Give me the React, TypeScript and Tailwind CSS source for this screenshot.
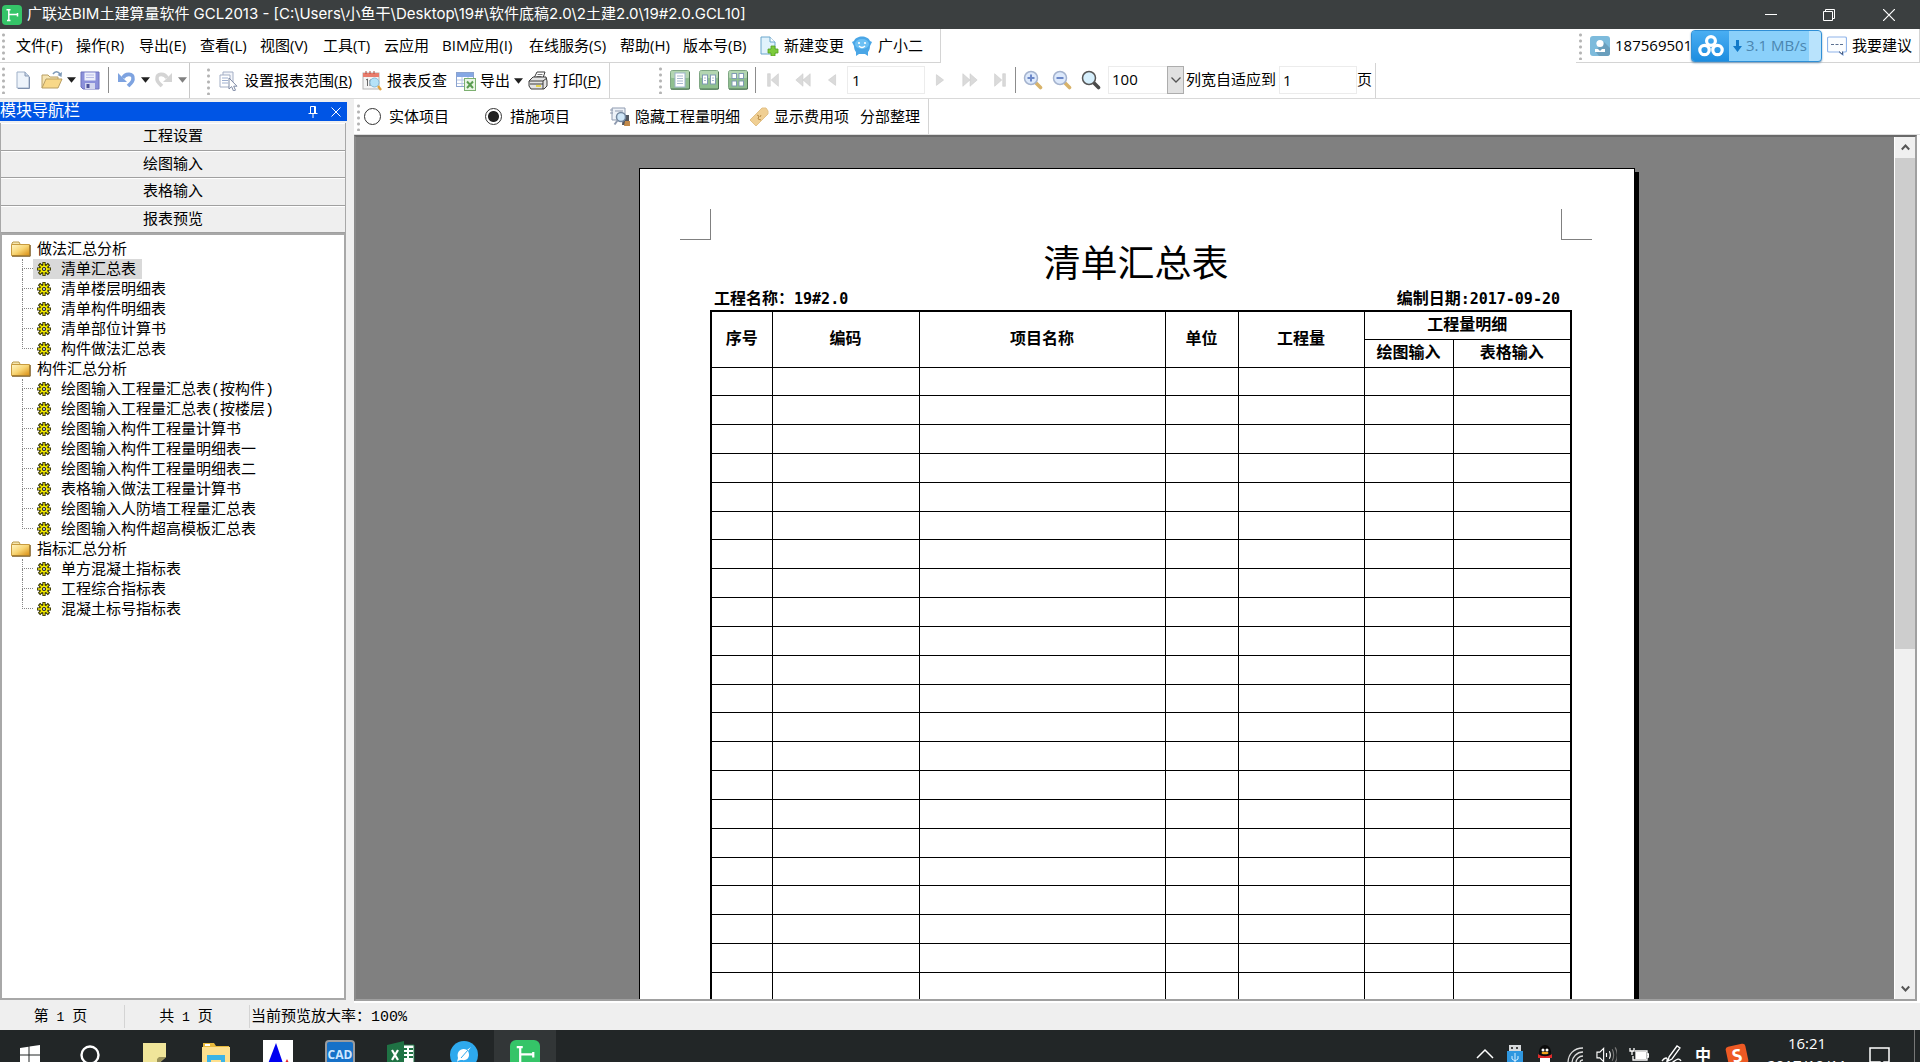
import { Fragment, type ReactNode } from "react";

const UI_FONT = "font-['Open_Sans','Noto_Sans_CJK_SC',sans-serif]";
const TITLE_FONT = "font-['Inter','Noto_Sans_CJK_SC',sans-serif]";
const SONG_FONT = "font-['Liberation_Mono','Noto_Sans_CJK_SC',sans-serif]";
const DIGIT_FONT = "font-['DejaVu_Sans_Mono',monospace]";

/* ---------- shared bits ---------- */

function Grip() {
  return (
    <span
      aria-hidden
      className="h-[28px] w-[3px] shrink-0 bg-[radial-gradient(circle,#b4b4b4_1px,transparent_2px)] bg-[length:3px_6px]"
    />
  );
}

function Bar() {
  return <span aria-hidden className="h-[26px] w-px shrink-0 bg-[#8c8c8c]" />;
}

function Caret({ muted = false }: { muted?: boolean }) {
  return (
    <svg viewBox="0 0 10 6" className={muted ? "h-[6px] w-[9px] text-[#808080]" : "h-[6px] w-[9px] text-[#202020]"}>
      <path d="M0 0h10L5 6z" fill="currentColor" />
    </svg>
  );
}

function Svg({ size = 20, children }: { size?: number; children: ReactNode }) {
  return (
    <svg width={size} height={size} viewBox="0 0 20 20" className="shrink-0" fill="none">
      {children}
    </svg>
  );
}

/* ---------- icons ---------- */

function GlodonIcon({ size }: { size: number }) {
  return (
    <Svg size={size}>
      <rect width="20" height="20" rx="4" fill="#35c468" />
      <path d="M4.500 4.700h4M6.800 4.700v11M5 15.400h3.500M7 9.500h9M15.500 8v3.600" stroke="#fff" strokeWidth="1.500" />
    </Svg>
  );
}

function NewIcon() {
  return (
    <Svg>
      <path d="M4 2h8l4 4v12H4z" fill="#eef4fb" stroke="#9fb0c8" />
      <path d="M12 2v4h4" fill="#c6d4e6" stroke="#8a9bb5" />
      <path d="M16.500 7v11.500H5" stroke="#8091ad" />
    </Svg>
  );
}

function OpenIcon() {
  return (
    <svg width="22" height="20" viewBox="0 0 22 20" fill="none" className="shrink-0">
      <path d="M1 18V5h6l2 2h8v4" fill="#f6e5b4" stroke="#b99f63" />
      <path d="M1 18 5 9h16l-4 9z" fill="#f8d888" stroke="#b99f63" />
      <path d="M12 4c2-3 5-3 7 0" stroke="#7d99b8" strokeWidth="1.600" />
      <path d="m21 2-.5 5-4-2z" fill="#7d99b8" />
    </svg>
  );
}

function SaveIcon() {
  return (
    <Svg>
      <path d="M1 2h18v17H3l-2-2z" fill="#8b90da" stroke="#6f73bd" />
      <rect x="4.500" y="2.500" width="11" height="8" fill="#eef0fb" />
      <path d="M6 5h8M6 7.500h8" stroke="#b9bde6" />
      <rect x="5" y="13" width="10" height="6" fill="#d4d7ef" />
      <rect x="6.500" y="14" width="3" height="4" fill="#4d5299" />
    </Svg>
  );
}

function UndoIcon({ muted = false }: { muted?: boolean }) {
  const c = muted ? "#d4d4d4" : "#7ea3e0";
  return (
    <svg width="18" height="18" viewBox="0 0 18 18" fill="none" className={muted ? "shrink-0 -scale-x-100" : "shrink-0"}>
      <path d="M5 7c2-5 11-5 10 1 0 3-3 5-5 7" stroke={c} strokeWidth="3.600" />
      <path d="M0 2v9h9z" fill={c} />
    </svg>
  );
}

function RangeIcon() {
  return (
    <Svg>
      <path d="M5 1h10v13H5z" fill="#f3f5fa" stroke="#a3aec5" />
      <path d="M2 4h10v12H2z" fill="#fff" stroke="#a3aec5" />
      <path d="M4 7h6M4 9.500h6M4 12h6" stroke="#9fb0d0" />
      <path d="M11 7v11l2.600-2.400L15.500 20l2-.8-1.800-4h3.300z" fill="#fff" stroke="#7f8ba5" />
    </Svg>
  );
}

function CheckBackIcon() {
  return (
    <Svg>
      <rect x="1" y="2" width="16" height="16" fill="#f4f4f4" stroke="#b4b4b4" />
      <rect x="1" y="2" width="16" height="4" fill="#e87c6c" />
      <path d="M4 0v3M8 0v3M12 0v3" stroke="#b04a3c" />
      <path d="M4 9l1.500-1v7M8 9h3M8 9v6" stroke="#666" />
      <circle cx="12.500" cy="11.500" r="4.500" fill="#b5e2f7" stroke="#86bbd8" />
      <path d="m16 15 3 4" stroke="#e2a23c" strokeWidth="2.400" />
    </Svg>
  );
}

function ExportIcon() {
  return (
    <Svg>
      <rect x="0.500" y="1.500" width="17" height="14" fill="#fff" stroke="#8ba3cf" />
      <rect x="1" y="2" width="16" height="4" fill="#86a8e4" />
      <path d="M1 9h16M1 12.500h16M6 6v9M12 6v9" stroke="#b9c8e4" />
      <rect x="8.500" y="7.500" width="11" height="12" fill="#e9f5e4" stroke="#7cb070" />
      <path d="m11 10.500 6 6.500M17 10.500l-6 6.500" stroke="#5a9c50" strokeWidth="2" />
    </Svg>
  );
}

function PrintIcon() {
  return (
    <Svg>
      <path d="M6 7 9 1h8l-2 6z" fill="#fff" stroke="#3c3c3c" />
      <path d="M9.500 3.500h5M8.500 5.500h5" stroke="#777" />
      <path d="m1 10 4-4h13l1 4v5l-3 3H3l-2-3z" fill="#e4e4e4" stroke="#3c3c3c" />
      <path d="M1 10h14l4-3M15 10v8M2 13h13" stroke="#3c3c3c" />
      <path d="M8 15h5" stroke="#e8d22a" strokeWidth="1.600" />
    </Svg>
  );
}

function PageView({ variant }: { variant: 1 | 2 | 4 }) {
  return (
    <Svg>
      <rect x="0.500" y="0.500" width="19" height="19" rx="2" fill="#8fbf8f" stroke="#7fa784" />
      <rect x="1" y="1" width="18" height="7" rx="1" fill="#b3d6b1" />
      <path d="M1 19h18.500V2" stroke="#4f7556" />
      {variant === 1 && (
        <>
          <rect x="5" y="3" width="10" height="14" fill="#fff" stroke="#9db4cc" />
          <path d="M7 6h6M7 8.500h6M7 11h6M7 13.500h6" stroke="#a8b9cf" />
        </>
      )}
      {variant === 2 && (
        <>
          <rect x="3.500" y="5" width="5" height="9" fill="#fff" stroke="#7f9bb3" />
          <rect x="11.500" y="5" width="5" height="9" fill="#fff" stroke="#7f9bb3" />
          <path d="M5 8h2M5 10.500h2M13 8h2M13 10.500h2" stroke="#a8b9cf" />
        </>
      )}
      {variant === 4 && (
        <>
          <rect x="4" y="3.500" width="4.500" height="5" fill="#fff" stroke="#7f9bb3" />
          <rect x="11" y="3.500" width="4.500" height="5" fill="#fff" stroke="#7f9bb3" />
          <rect x="4" y="11" width="4.500" height="5" fill="#fff" stroke="#7f9bb3" />
          <rect x="11" y="11" width="4.500" height="5" fill="#fff" stroke="#7f9bb3" />
        </>
      )}
    </Svg>
  );
}

function NavIcon({ kind }: { kind: "first" | "back" | "prev" | "next" | "forward" | "last" }) {
  const shapes = {
    first: "M4 3h3v14H4zM16 3v14L8 10z",
    back: "M10 3v14L2 10zM18 3v14l-8-7z",
    prev: "M14 4v12l-8-6z",
    next: "M6 4v12l8-6z",
    forward: "M2 3v14l8-7zM10 3v14l8-7z",
    last: "M13 3h3v14h-3zM4 3v14l8-7z",
  };
  return (
    <Svg size={18}>
      <path d={shapes[kind]} fill="#dadada" stroke="#c9c9c9" strokeWidth="0.600" />
    </Svg>
  );
}

function Lens({ sign }: { sign?: "+" | "-" }) {
  return (
    <Svg>
      <path d="m12.500 12.500 5 5" stroke={sign ? "#d8b36a" : "#4a4a4a"} strokeWidth="3.600" strokeLinecap="round" />
      <circle cx="8" cy="8" r="6.500" fill={sign ? "#dde9fb" : "#d6effc"} stroke={sign ? "#a4b3ce" : "#555"} strokeWidth="1.500" />
      {sign && <path d={sign === "+" ? "M4.500 8h7M8 4.500v7" : "M4.500 8h7"} stroke="#6c88c8" strokeWidth="2" />}
    </Svg>
  );
}

function NewChangeIcon() {
  return (
    <Svg>
      <path d="M2 1h9l5 5v12H2z" fill="#e0f2fc" stroke="#6ba6cc" />
      <path d="M11 1v5h5" fill="#fff" stroke="#6ba6cc" />
      <path d="M12 10h4v3h3v4h-3v3h-4v-3H9v-4h3z" fill="#7ccb3c" stroke="#56a01f" strokeWidth="0.800" />
    </Svg>
  );
}

function MascotIcon() {
  return (
    <Svg>
      <path d="M2 5c2-6 14-6 16 0l2 1-2 4c0 3-1 5-2 6v4l-3-2H7l-3 2v-4c-1-1-2-3-2-6L0 6z" fill="#4aa6e6" />
      <ellipse cx="10" cy="8" rx="7" ry="5" fill="#6cc0f4" />
      <circle cx="7" cy="7" r="1.100" fill="#fff" />
      <circle cx="13" cy="7" r="1.100" fill="#fff" />
      <path d="M7 10c2 2 4 2 6 0" stroke="#fff" strokeWidth="1.200" />
    </Svg>
  );
}

function UserIcon() {
  return (
    <Svg>
      <rect width="20" height="20" rx="3" fill="#7dbbdc" />
      <path d="m14 6 6 6v5a3 3 0 0 1-3 3H9l-4-5z" fill="#6a9fbd" />
      <circle cx="10" cy="7.500" r="3.600" fill="#fff" />
      <path d="M5 13h3l2 2 2-2h3v3H5z" fill="#fff" />
    </Svg>
  );
}

function ChatIcon() {
  return (
    <Svg>
      <path d="M2 1h16a1.500 1.500 0 0 1 1.500 1.500v12A1.500 1.500 0 0 1 18 16h-2v3l-4-3H2a1.500 1.500 0 0 1-1.500-1.500v-12A1.500 1.500 0 0 1 2 1z" fill="#fbfdff" stroke="#8fb4ea" strokeWidth="1.200" />
      <path d="M4 8.500h3M8.500 8.500h3M13 8.500h3" stroke="#5a6f90" />
      <path d="m12 15.500 3.500 3v-3" stroke="#4a5d7d" />
    </Svg>
  );
}

function HideDetailIcon() {
  return (
    <Svg>
      <path d="M2 1h13v12H2z" fill="#eef2f8" stroke="#8f9bb0" />
      <path d="M0 3h3M0 6h3M5 4h8" stroke="#8f9bb0" />
      <path d="M13 8h6v10h-7z" fill="#51565f" />
      <path d="M15 14h5v5h-6z" fill="#c28a4b" />
      <circle cx="11" cy="10" r="4.500" fill="#cfe6f8" stroke="#73879f" strokeWidth="1.500" />
      <path d="m7.500 13.500-3 4" stroke="#8f9bb0" strokeWidth="2" />
    </Svg>
  );
}

function FeeIcon() {
  return (
    <Svg>
      <path d="M1 13 13 1h4l2 3v3L7 19z" fill="#f0cf93" stroke="#e2c188" />
      <path d="m8 8 2 1-1 3 3 1M12 8l-1 2" stroke="#b98c45" />
    </Svg>
  );
}

function FolderIcon() {
  return (
    <svg width="20" height="16" viewBox="0 0 20 16" fill="none" className="shrink-0">
      <defs>
        <linearGradient id="folder" x1="0" y1="0" x2="1" y2="1">
          <stop offset="0" stopColor="#fff6c8" />
          <stop offset="0.500" stopColor="#f8d573" />
          <stop offset="1" stopColor="#d88d12" />
        </linearGradient>
      </defs>
      <path d="M1 4V2l1-1h6l1 2v1" fill="#f5e5ad" stroke="#b99b4d" />
      <path d="M0.500 3.500h18v11h-18z" fill="url(#folder)" stroke="#c79a3f" />
      <path d="M1 15.200h18.200V4" stroke="#6e4a0c" />
    </svg>
  );
}

function GearIcon() {
  const spokes = "M7 .8v12.400M.8 7h12.400M2.700 2.700l8.600 8.600M11.300 2.700l-8.600 8.600";
  return (
    <svg width="14" height="14" viewBox="0 0 14 14" fill="none" className="shrink-0">
      <path d="M7 0v14M0 7h14M2 2l10 10M12 2 2 12" stroke="#2a2900" strokeWidth="3.200" />
      <circle cx="7" cy="7" r="5" fill="#2a2900" />
      <path d={spokes} stroke="#f4ec00" strokeWidth="1.400" />
      <circle cx="7" cy="7" r="3.600" fill="#f4ec00" />
      <circle cx="7" cy="7" r="1.500" fill="#fff" stroke="#222" strokeWidth="1.200" />
    </svg>
  );
}

/* ---------- title and menus ---------- */

function TitleBar() {
  return (
    <header className="flex h-[29px] shrink-0 items-center bg-[#3b3f40] pl-[2px] text-white">
      <GlodonIcon size={20} />
      <h1 className={`mb-px ml-[5px] flex-1 text-[15px] leading-5 whitespace-nowrap ${TITLE_FONT}`}>
        广联达BIM土建算量软件 GCL2013 - [C:\Users\小鱼干\Desktop\19#\软件底稿2.0\2土建2.0\19#2.0.GCL10]
      </h1>
      <button aria-label="最小化" className="flex h-full w-[58px] items-center justify-center">
        <svg width="12" height="12" viewBox="0 0 12 12"><path d="M0 5.500h12" stroke="#fff" /></svg>
      </button>
      <button aria-label="还原" className="flex h-full w-[58px] items-center justify-center">
        <svg width="12" height="12" viewBox="0 0 12 12" fill="none" stroke="#fff"><path d="M.5 2.500h9v9h-9zM2.500 2V.5h9v9H10" /></svg>
      </button>
      <button aria-label="关闭" className="flex h-full w-[62px] items-center justify-center">
        <svg width="12" height="12" viewBox="0 0 12 12"><path d="m0 0 12 12M12 0 0 12" stroke="#fff" strokeWidth="1.200" /></svg>
      </button>
    </header>
  );
}

const MENUS = [
  { label: "文件(F)", width: "w-[60px]" },
  { label: "操作(R)", width: "w-[63px]" },
  { label: "导出(E)", width: "w-[61px]" },
  { label: "查看(L)", width: "w-[60px]" },
  { label: "视图(V)", width: "w-[63px]" },
  { label: "工具(T)", width: "w-[61px]" },
  { label: "云应用", width: "w-[58px]" },
  { label: "BIM应用(I)", width: "w-[87px]" },
  { label: "在线服务(S)", width: "w-[91px]" },
  { label: "帮助(H)", width: "w-[63px]" },
  { label: "版本号(B)", width: "w-[76px]" },
];

function MenuRow() {
  return (
    <div className="flex h-[34px] shrink-0 justify-between">
      <nav className="flex h-full items-center border-r border-b border-[#d4d4d4] pl-[2px] text-[15px]">
        <Grip />
        <span className="w-[11px]" />
        {MENUS.map((m) => (
          <button key={m.label} className={`${m.width} text-left whitespace-nowrap`}>{m.label}</button>
        ))}
        <button className="flex w-[93px] items-center gap-[5px] whitespace-nowrap"><NewChangeIcon />新建变更</button>
        <button className="flex w-[78px] items-center gap-[6px] whitespace-nowrap"><MascotIcon />广小二</button>
        <span className="w-[10px]" />
      </nav>
      <div className="flex h-full items-center border-r border-b border-[#d4d4d4] pl-[3px] text-[15px]">
        <Grip />
        <button className="ml-2 flex w-[101px] items-center gap-[5px] whitespace-nowrap"><UserIcon />187569501</button>
        <div className="z-10 flex h-[32px] w-[131px] overflow-hidden rounded-[4px] border border-[#2f8fd6] bg-[#8ad0fa] shadow-[0_1px_2px_#7a9ab5]">
          <div className="flex w-[37px] items-center justify-center bg-linear-to-b from-[#49aef2] to-[#1b8de0]">
            <svg width="26" height="22" viewBox="0 0 26 22" fill="none" stroke="#fff" strokeWidth="3.200">
              <circle cx="13" cy="6" r="4.400" />
              <circle cx="6.500" cy="15" r="4.700" />
              <circle cx="19.500" cy="15" r="4.700" />
            </svg>
          </div>
          <div className="flex flex-1 items-center gap-1 pl-1 text-[15px] whitespace-nowrap text-[#4a86b0]">
            <svg width="9" height="12" viewBox="0 0 9 12"><path d="M3 0h3v6h3l-4.500 6L0 6h3z" fill="#1279c8" /></svg>
            3.1 MB/s
          </div>
          <span className="-ml-3 w-3 bg-white/40" />
        </div>
        <button className="ml-[5px] flex w-[92px] items-center gap-[5px] whitespace-nowrap"><ChatIcon />我要建议</button>
      </div>
    </div>
  );
}

/* ---------- toolbars ---------- */

const PAGER_BACK = [
  { kind: "first", label: "首页" },
  { kind: "back", label: "快退" },
  { kind: "prev", label: "上一页" },
] as const;

const PAGER_FORWARD = [
  { kind: "next", label: "下一页" },
  { kind: "forward", label: "快进" },
  { kind: "last", label: "末页" },
] as const;

function Toolbar() {
  return (
    <div className="flex h-[36px] shrink-0 border-b border-[#d9d9d9] text-[15px] whitespace-nowrap">
      <div className="flex w-[190px] items-center border-r border-[#c8c8c8] pb-[2px] pl-[2px]">
        <Grip />
        <button aria-label="新建" className="ml-2"><NewIcon /></button>
        <button aria-label="打开" className="ml-2 flex items-center gap-1"><OpenIcon /><Caret /></button>
        <button aria-label="保存" className="ml-1 mr-2"><SaveIcon /></button>
        <Bar />
        <button aria-label="撤销" className="ml-[9px] flex items-center gap-[5px]"><UndoIcon /><Caret /></button>
        <button aria-label="重做" className="ml-1 flex items-center gap-[6px]"><UndoIcon muted /><Caret muted /></button>
      </div>
      <div className="flex w-[420px] items-center border-r border-[#d4d4d4] pl-[17px]">
        <Grip />
        <button className="ml-2 flex w-[144px] items-center gap-[6px]"><RangeIcon /><span>设置报表范围(<u>R</u>)</span></button>
        <button className="flex w-[94px] items-center gap-[5px]"><CheckBackIcon />报表反查</button>
        <button className="flex w-[72px] items-center gap-1"><ExportIcon />导出<Caret /></button>
        <button className="flex items-center gap-[5px]"><PrintIcon /><span>打印(<u>P</u>)</span></button>
      </div>
      <div className="flex w-[766px] items-center border-r border-[#d4d4d4] pb-[2px] pl-[49px]">
        <Grip />
        <div className="ml-2 flex gap-[9px]">
          <button aria-label="单页"><PageView variant={1} /></button>
          <button aria-label="双页"><PageView variant={2} /></button>
          <button aria-label="多页"><PageView variant={4} /></button>
        </div>
        <span className="w-[7px]" />
        <Bar />
        <div className="ml-2 flex w-[77px] justify-between">
          {PAGER_BACK.map((p) => (
            <button key={p.kind} aria-label={p.label}><NavIcon kind={p.kind} /></button>
          ))}
        </div>
        <input aria-label="页码" defaultValue="1" className="ml-[6px] h-[28px] w-[78px] border border-[#ececec] px-1 text-[15px]" />
        <div className="ml-[6px] flex w-[78px] justify-between">
          {PAGER_FORWARD.map((p) => (
            <button key={p.kind} aria-label={p.label}><NavIcon kind={p.kind} /></button>
          ))}
        </div>
        <span className="w-[6px]" />
        <Bar />
        <div className="mx-[7px] flex gap-[9px]">
          <button aria-label="放大"><Lens sign="+" /></button>
          <button aria-label="缩小"><Lens sign="-" /></button>
          <button aria-label="缩放"><Lens /></button>
        </div>
        <div className="relative h-[28px] w-[76px] shrink-0">
          <select aria-label="缩放比例" defaultValue="100" className="h-full w-full appearance-none border border-[#ececec] px-[3px] text-[15px]">
            <option>100</option>
          </select>
          <span className="pointer-events-none absolute top-0 right-0 flex h-full w-[17px] items-center justify-center border border-[#adadad] bg-[#e1e1e1]">
            <svg width="10" height="6" viewBox="0 0 10 6" fill="none"><path d="m.5.5 4.500 4.500L9.500.5" stroke="#555" strokeWidth="1.300" /></svg>
          </span>
        </div>
        <label htmlFor="fit" className="ml-[2px] w-[93px]">列宽自适应到</label>
        <input id="fit" defaultValue="1" className="h-[28px] w-[78px] border border-[#ececec] px-[3px] text-[15px]" />
        <span>页</span>
      </div>
    </div>
  );
}

function OptionsRow() {
  const radio = "size-[17px] appearance-none rounded-full border border-[#333] bg-white checked:bg-[radial-gradient(circle,#222_5px,#fff_6px)]";
  return (
    <div className="flex h-[36px] shrink-0 border-b border-[#dedede] text-[15px] whitespace-nowrap">
      <div className="flex w-[575px] items-center border-r border-[#d4d4d4] pl-[3px]">
        <Grip />
        <label className="ml-1 flex w-[121px] items-center gap-2"><input type="radio" name="kind" className={radio} />实体项目</label>
        <label className="flex w-[125px] items-center gap-2"><input type="radio" name="kind" defaultChecked className={radio} />措施项目</label>
        <button className="flex w-[139px] items-center gap-[5px]"><HideDetailIcon />隐藏工程量明细</button>
        <button className="flex w-[111px] items-center gap-[5px]"><FeeIcon />显示费用项</button>
        <button>分部整理</button>
      </div>
    </div>
  );
}

/* ---------- navigation sidebar ---------- */

const TREE = [
  {
    label: "做法汇总分析",
    items: ["清单汇总表", "清单楼层明细表", "清单构件明细表", "清单部位计算书", "构件做法汇总表"],
  },
  {
    label: "构件汇总分析",
    items: [
      "绘图输入工程量汇总表(按构件)",
      "绘图输入工程量汇总表(按楼层)",
      "绘图输入构件工程量计算书",
      "绘图输入构件工程量明细表一",
      "绘图输入构件工程量明细表二",
      "表格输入做法工程量计算书",
      "绘图输入人防墙工程量汇总表",
      "绘图输入构件超高模板汇总表",
    ],
  },
  { label: "指标汇总分析", items: ["单方混凝土指标表", "工程综合指标表", "混凝土标号指标表"] },
];

function Sidebar() {
  return (
    <aside className={`flex w-[347px] shrink-0 flex-col pt-[3px] pb-[3px] text-[15px] ${SONG_FONT}`}>
      <div className="flex h-[19px] shrink-0 items-center bg-[#0055e5] text-white">
        <h2 className="flex-1 pt-[1px] text-[16px] leading-[18px]">模块导航栏</h2>
        <button aria-label="固定" className="mr-[13px]">
          <svg width="10" height="12" viewBox="0 0 10 12" fill="none" stroke="#fff"><path d="M2.500 7V.5h5V7M6.500 1v6M.5 7.500h9M5 8v4" /></svg>
        </button>
        <button aria-label="关闭" className="mr-[6px]">
          <svg width="10" height="10" viewBox="0 0 10 10"><path d="m.5.5 9 9M9.500.5l-9 9" stroke="#fff" /></svg>
        </button>
      </div>
      <div className="mt-[2px] mr-[1px] grid h-[110px] shrink-0 grid-rows-4 border-x border-[#a8a8a8]">
        {["工程设置", "绘图输入", "表格输入", "报表预览"].map((t) => (
          <button key={t} className="border-t border-b border-t-white border-b-[#a0a0a0] bg-[#efefef] pt-[3px] leading-5">{t}</button>
        ))}
      </div>
      <div className="mr-[1px] min-h-0 flex-1 border-2 border-[#a8a8a8] bg-white pt-1">
        {TREE.map((group) => (
          <Fragment key={group.label}>
            <div className="flex h-5 items-center pl-[9px] leading-5"><FolderIcon /><span className="ml-[6px] pt-[3px]">{group.label}</span></div>
            <ul>
              {group.items.map((item, i) => (
                <li key={item} className="flex h-5 pl-[20px]">
                  <span className="flex w-[11px] flex-col">
                    <span className="h-[10px] border-b border-l border-dotted border-[#888]" />
                    {i < group.items.length - 1 && <span className="flex-1 border-l border-dotted border-[#888]" />}
                  </span>
                  <a
                    href="#"
                    className={
                      item === "清单汇总表"
                        ? "flex items-center bg-[#d9d9d9] pr-[6px] pl-1 leading-5 whitespace-nowrap"
                        : "flex items-center pl-1 leading-5 whitespace-nowrap"
                    }
                  >
                    <GearIcon />
                    <span className="ml-[10px] pt-[3px]">{item}</span>
                  </a>
                </li>
              ))}
            </ul>
          </Fragment>
        ))}
      </div>
    </aside>
  );
}

/* ---------- report preview ---------- */

const BODY_ROWS = Array.from({ length: 30 }, (_, i) => i);
const COLUMNS = ["w-[61px]", "w-[147px]", "w-[246px]", "w-[73px]", "w-[126px]", "w-[89px]", "w-[118px]"];

function Report() {
  const cell = "border border-black p-0";
  const headCell = "border border-black p-0 pt-[2px]";
  return (
    <article className={`mt-[31px] h-[1410px] w-[996px] shrink-0 border border-black bg-white pt-[40px] pl-[40px] shadow-[4px_4px_0_#000] ${SONG_FONT}`}>
      <div className="flex w-[912px] justify-between">
        <span className="size-[31px] border-r border-b border-[#808080]" />
        <span className="size-[31px] border-b border-l border-[#808080]" />
      </div>
      <div className="ml-[30px] w-[860px]">
        <h2 className="mr-2 pt-[6px] text-center text-[37px] leading-[43px]">清单汇总表</h2>
        <div className="mr-2 flex h-[21px] justify-between pr-[2px] pl-1 text-[16px] leading-5 font-bold">
          <p>工程名称：<span className={`text-[15px] ${DIGIT_FONT}`}>19#2.0</span></p>
          <p>编制日期<span className={`text-[15px] ${DIGIT_FONT}`}>:2017-09-20</span></p>
        </div>
        <table className="h-[923px] w-full table-fixed border-collapse border-2 border-black text-[16px] leading-5">
          <colgroup>
            {COLUMNS.map((w, i) => (
              <col key={i} className={w} />
            ))}
          </colgroup>
          <thead>
            <tr className="h-[28px]">
              {["序号", "编码", "项目名称", "单位", "工程量"].map((t) => (
                <th key={t} rowSpan={2} className={headCell}>{t}</th>
              ))}
              <th colSpan={2} className={headCell}>工程量明细</th>
            </tr>
            <tr className="h-[28px]">
              <th className={headCell}>绘图输入</th>
              <th className={headCell}>表格输入</th>
            </tr>
          </thead>
          <tbody>
            {BODY_ROWS.map((r) => (
              <tr key={r} className="h-[28px]">
                {COLUMNS.map((_, c) => (
                  <td key={c} className={cell} />
                ))}
              </tr>
            ))}
          </tbody>
        </table>
      </div>
    </article>
  );
}

function Scrollbar() {
  return (
    <div className="flex w-[21px] shrink-0 flex-col border-l border-white bg-[#f0f0f0]">
      <button aria-label="向上滚动" className="flex h-[21px] shrink-0 items-center justify-center">
        <svg width="9" height="7" viewBox="0 0 9 7" fill="none"><path d="m.8 5.500 3.700-4 3.700 4" stroke="#555" strokeWidth="2" /></svg>
      </button>
      <div className="h-[491px] bg-[#cdcdcd]" />
      <span className="flex-1" />
      <button aria-label="向下滚动" className="flex h-[22px] shrink-0 items-center justify-center">
        <svg width="9" height="7" viewBox="0 0 9 7" fill="none"><path d="m.8 1.500 3.700 4 3.700-4" stroke="#555" strokeWidth="2" /></svg>
      </button>
    </div>
  );
}

/* ---------- status and task bars ---------- */

function StatusBar() {
  return (
    <footer className={`flex h-[27px] shrink-0 items-stretch bg-[#efefef] py-[2px] text-[15px] leading-[25px] whitespace-pre ${SONG_FONT}`}>
      <span className="w-[125px] border-r border-[#d4d4d4] pr-[3px] text-center">第<span className="text-[13px]"> 1 </span>页</span>
      <span className="w-[125px] border-r border-[#d4d4d4] pr-[2px] text-center">共<span className="text-[13px]"> 1 </span>页</span>
      <span className="pl-px">当前预览放大率：<span className="text-[15px]">100%</span></span>
    </footer>
  );
}

function TaskBar() {
  return (
    <div className="flex h-[32px] shrink-0 items-start justify-between overflow-hidden bg-[#222627] text-white">
      <div className="flex h-[50px] items-center">
        <button aria-label="开始" className="flex w-[60px] justify-center">
          <svg width="20" height="20" viewBox="0 0 20 20" fill="#fff"><path d="M0 3l8.500-1.200V9.500H0zM9.500 1.600 20 0v9.500H9.500zM0 10.500h8.500v7.700L0 17zM9.500 10.500H20V20l-10.500-1.500z" /></svg>
        </button>
        <button aria-label="搜索" className="flex w-[60px] justify-center">
          <svg width="20" height="20" viewBox="0 0 20 20" fill="none"><circle cx="10" cy="10" r="8.500" stroke="#fff" strokeWidth="2.400" /></svg>
        </button>
        <button aria-label="便笺" className="flex w-[66px] justify-center pl-[3px]">
          <svg width="24" height="24" viewBox="0 0 24 24"><path d="M0 0h23v14l-9 8H0z" fill="#f0e59a" /><path d="M14 22v-6l2-2h7z" fill="#9c935a" /></svg>
        </button>
        <button aria-label="文件资源管理器" className="flex w-[60px] justify-center">
          <svg width="28" height="26" viewBox="0 0 28 26"><path d="M1 1h11l2 3h13v21H1z" fill="#e8b93c" /><path d="M3 2h5v2H3z" fill="#fff" /><path d="M0 5h28v20H0z" fill="#fee08e" /><path d="M5 25V13h18v12h-4v-7h-10v7z" fill="#3cb4e6" /></svg>
        </button>
        <button aria-label="绘图" className="flex w-[62px] justify-center pl-px">
          <svg width="30" height="30" viewBox="0 0 30 30"><path d="M0 0h30v30H0z" fill="#fff" /><path d="m13 3 9 26H3z" fill="#0000f0" /><path d="m24 19 4 8h-8z" fill="#e8262a" /></svg>
        </button>
        <button aria-label="CAD" className="flex w-[62px] justify-center pl-[2px]">
          <span className="flex size-[30px] items-center justify-center rounded-[4px] border-2 border-[#9a9c9e] bg-[#1671c8] text-[12px] leading-4 font-bold text-[#cfe8ff]">CAD</span>
        </button>
        <button aria-label="Excel" className="flex w-[62px] justify-center">
          <svg width="28" height="28" viewBox="0 0 28 28"><path d="M14 4h13v20H14z" fill="#fff" stroke="#1f7244" /><path d="M16 8h4M16 12h4M16 16h4M22 8h4M22 12h4M22 16h4" stroke="#1f7244" strokeWidth="2" /><path d="m0 4 17-4v28L0 24z" fill="#1f7244" /><path d="m5 9 6 10M11 9 5 19" stroke="#fff" strokeWidth="2.200" /></svg>
        </button>
        <button aria-label="浏览器" className="flex w-[62px] justify-center pl-px">
          <svg width="28" height="28" viewBox="0 0 28 28"><circle cx="14" cy="14" r="14" fill="#2ea9ee" /><path d="m21 6-3 4c3 6-1 10-6 9-2 0-3 0-5 2l1-4c-2-7 4-11 9-8z" fill="#fff" /><path d="m11 17 7-8" stroke="#2ea9ee" /></svg>
        </button>
        <button aria-label="广联达" className="flex h-full w-[62px] items-center justify-center bg-[#323637]"><GlodonIcon size={30} /></button>
      </div>
      <div className="flex h-[50px] items-center">
        <div className="flex items-center gap-3">
          <svg width="18" height="18" viewBox="0 0 18 18" fill="none" stroke="#fff" strokeWidth="1.500"><path d="m1 12 8-8 8 8" /></svg>
          <svg width="18" height="20" viewBox="0 0 18 20"><path d="M3 0h12v6H3z" fill="#d6d9db" /><path d="M5 2h2v2H5zM10 2h2v2h-2z" fill="#444" /><path d="M1 6h16v14H1z" fill="#2f97e0" /><path d="M9 8v11M6 11v3l3 2 3-2v-3" stroke="#d8efff" fill="none" /></svg>
          <svg width="18" height="20" viewBox="0 0 18 20"><ellipse cx="9" cy="7" rx="6" ry="7" fill="#0c0c0c" /><circle cx="7" cy="5" r="1.500" fill="#fff" /><circle cx="11" cy="5" r="1.500" fill="#fff" /><ellipse cx="9" cy="8" rx="3.500" ry="1.300" fill="#f3a51b" /><path d="M2 9c4 3 10 3 14 0v4H2z" fill="#e02a2a" /><path d="M4 13h10v7H4z" fill="#fff" /></svg>
          <svg width="18" height="18" viewBox="0 0 18 18" fill="none" stroke="#ddd" strokeWidth="1.300"><path d="M2 17C2 8 8 2 17 2M6 17c0-6 5-11 11-11M10 17c0-4 3-7 7-7M14 17c0-2 1-3 3-3" /></svg>
          <svg width="21" height="18" viewBox="0 0 22 18" fill="none" stroke="#fff" strokeWidth="1.200"><path d="M1 6h3l4-4v14l-4-4H1zM11 7v4M14 5c1 2 1 6 0 8" /><path d="M17 3c2 4 2 8 0 12M20 1c3 5 3 11 0 16" stroke="#777" /></svg>
          <svg width="20" height="18" viewBox="0 0 20 18" fill="none" stroke="#fff" strokeWidth="1.300"><path d="M6 5h12v9H4v-4M18 8h1.500v3H18" /><path d="M7 6.500h9.500v6H7z" fill="#fff" /><path d="M1 2v3h4V2M3 5v4" /></svg>
          <svg width="22" height="20" viewBox="0 0 22 20" fill="none" stroke="#fff" strokeWidth="1.300"><path d="m8 12 8-11 3 2-8 11-4 2zM1 16c3-4 6-4 5 0s3 3 6 1 6-5 8-1" /></svg>
          <span className="text-[16px] leading-5 font-bold">中</span>
          <span className="ml-1 flex size-[20px] -rotate-12 items-center justify-center rounded-[3px] bg-[#ee5a24] text-[18px] leading-5 font-bold">S</span>
        </div>
        <div className="mt-[-2px] ml-[20px] w-[80px] text-center text-[15px] leading-[22px]">
          <div>16:21</div>
          <div>2017/10/11</div>
        </div>
        <svg width="21" height="20" viewBox="0 0 21 20" fill="none" stroke="#fff" strokeWidth="1.500" className="mt-1 ml-[22px]"><path d="M1 1h19v14h-5v4l-4-4H1z" /></svg>
        <span className="ml-6 h-full w-px bg-[#777]" />
        <span className="w-[5px]" />
      </div>
    </div>
  );
}

export default function App() {
  return (
    <div className={`flex h-screen flex-col overflow-hidden bg-white text-black ${UI_FONT}`}>
      <TitleBar />
      <MenuRow />
      <Toolbar />
      <div className="flex min-h-0 flex-1 bg-[#efefef]">
        <Sidebar />
        <main className="ml-[7px] flex min-w-0 flex-1 flex-col bg-white">
          <OptionsRow />
          <section className="mr-[3px] mb-[2px] flex min-h-0 flex-1 border-2 border-[#a0a0a0] border-t-[#696969] border-l-[#8a8a8a]">
            <div className="flex min-w-0 flex-1 justify-center overflow-hidden bg-[#808080] pl-[24px]">
              <Report />
            </div>
            <Scrollbar />
          </section>
        </main>
      </div>
      <StatusBar />
      <TaskBar />
    </div>
  );
}
